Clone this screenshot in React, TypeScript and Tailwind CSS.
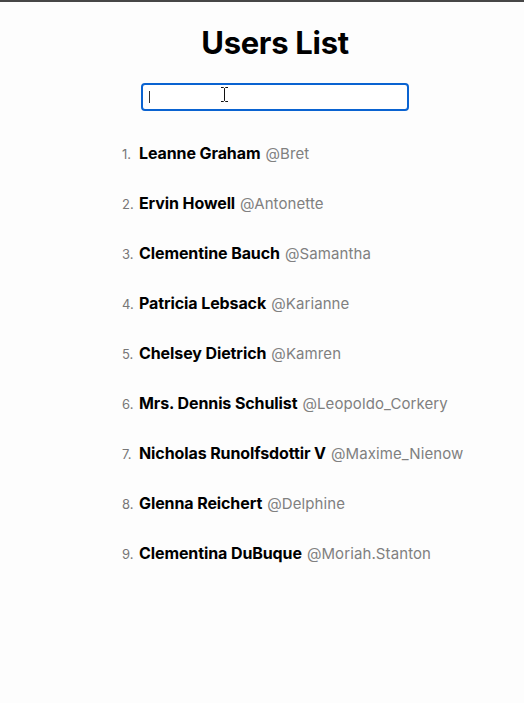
const users = [
  { name: "Leanne Graham", username: "Bret" },
  { name: "Ervin Howell", username: "Antonette" },
  { name: "Clementine Bauch", username: "Samantha" },
  { name: "Patricia Lebsack", username: "Karianne" },
  { name: "Chelsey Dietrich", username: "Kamren" },
  { name: "Mrs. Dennis Schulist", username: "Leopoldo_Corkery" },
  { name: "Nicholas Runolfsdottir V", username: "Maxime_Nienow" },
  { name: "Glenna Reichert", username: "Delphine" },
  { name: "Clementina DuBuque", username: "Moriah.Stanton" },
];

function IBeam() {
  return (
    <svg
      className="absolute left-[77px] top-[1px]"
      width="9"
      height="17"
      viewBox="0 0 9 17"
      fill="none"
    >
      <path
        d="M1 1.5h2.5L4.5 2.5L5.5 1.5H8M4.5 2.5v12M1 15.5h2.5L4.5 14.5L5.5 15.5H8"
        stroke="#fff"
        strokeWidth="2.5"
      />
      <path
        d="M1 1.5h2.5L4.5 2.5L5.5 1.5H8M4.5 2.5v12M1 15.5h2.5L4.5 14.5L5.5 15.5H8"
        stroke="#111"
        strokeWidth="1"
      />
    </svg>
  );
}

export default function App() {
  return (
    <main
      className="min-h-[703px] w-[524px] border-t-2 border-[#474747] bg-[#fdfdfd] text-black"
      style={{ fontFamily: "Inter, 'Noto Sans', sans-serif" }}
    >
      <div className="flex flex-col items-center pl-[26px] pt-[21px]">
        <h1 className="text-[31px] font-bold leading-[40px] tracking-[-0.3px]">
          Users List
        </h1>
        <div className="relative mt-[20px] h-[28px] w-[268px] rounded-[4px] border-2 border-[#0a63d1] bg-white">
          <span className="absolute left-[6px] top-[6px] h-[12px] w-px bg-[#333]" />
          <IBeam />
        </div>
      </div>

      <ol className="mt-[17px] pl-[122px]">
        {users.map((u, i) => (
          <li key={u.username} className="flex h-[50px] items-center whitespace-nowrap">
            <span className="flex items-baseline">
              <span className="w-[17px] text-[13px] text-[#777]">{i + 1}.</span>
              <span className="text-[16px] font-bold tracking-[-0.1px]">{u.name}</span>
              <span className="ml-[5px] text-[15px] tracking-[0.1px] text-[#808080]">
                @{u.username}
              </span>
            </span>
          </li>
        ))}
      </ol>
    </main>
  );
}
